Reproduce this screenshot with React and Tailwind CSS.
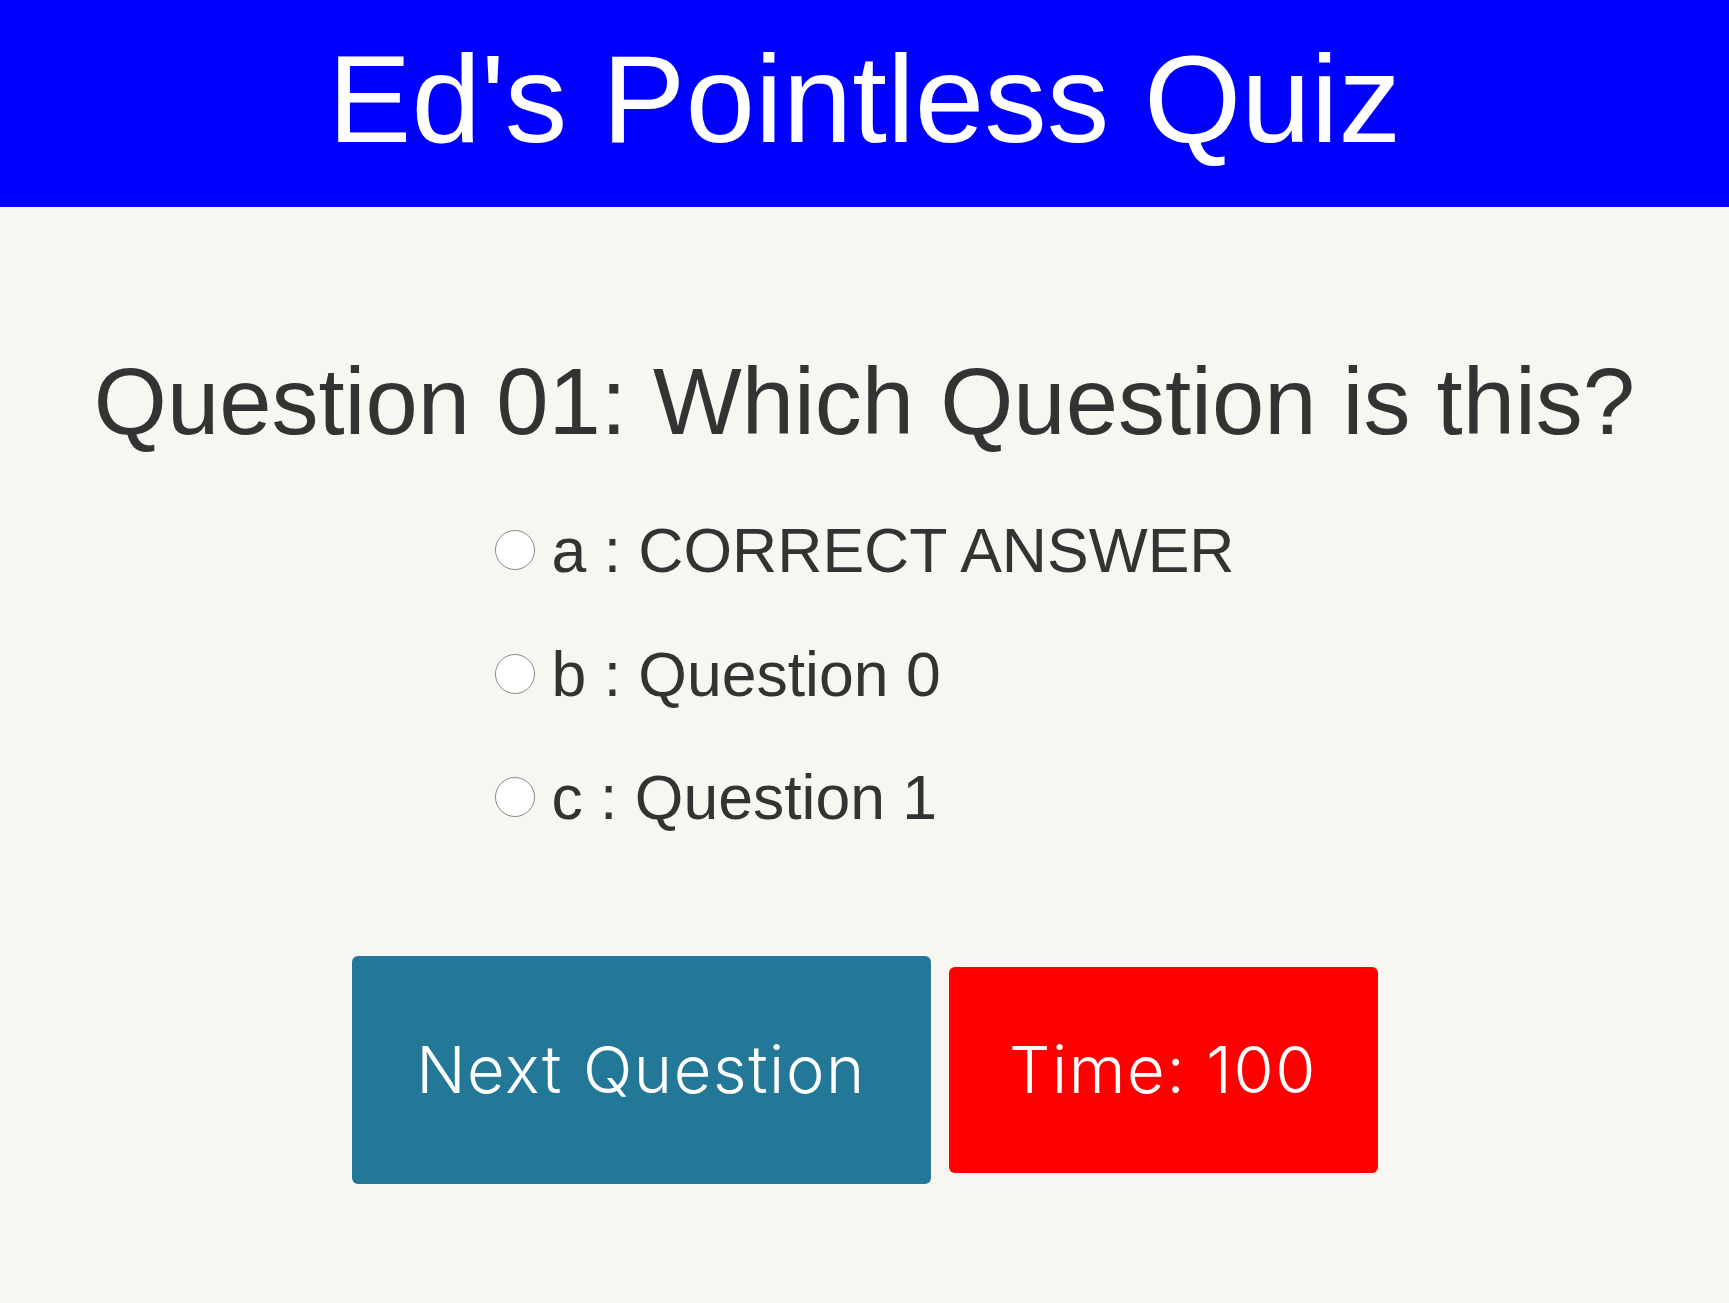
import React from "react";

const options = [
  { key: "a", label: "CORRECT ANSWER" },
  { key: "b", label: "Question 0" },
  { key: "c", label: "Question 1" },
];

export default function App() {
  return (
    <div className="min-h-[1303px] bg-[#f7f6f1] font-['Liberation_Sans',Arial,sans-serif] text-[#333333]">
      <header className="h-[207px] bg-[#0000ff] pt-[36px] text-center">
        <h1 className="text-[125px] leading-none font-normal text-white">Ed's Pointless Quiz</h1>
      </header>
      <main className="flex flex-col items-center">
        <h2 className="mt-[148px] text-[94px] leading-none font-normal text-center">
          Question 01: Which Question is this?
        </h2>
        <div className="mt-[70px] flex flex-col items-start gap-[61px]">
          {options.map((o) => (
            <label key={o.key} className="flex items-center text-[62.5px] leading-none">
              <input
                type="radio"
                name="answer"
                className="appearance-none w-[40px] h-[40px] rounded-full border border-[#8a8a8a] bg-white shrink-0"
              />
              <span className="ml-[17px]">
                {o.key} : {o.label}
              </span>
            </label>
          ))}
        </div>
        <div className="mt-[127px] flex items-center gap-[18px] font-['Inter',sans-serif] font-light tracking-[1.6px] text-white">
          <button className="w-[579px] h-[228px] rounded-[6px] bg-[#237898] text-[65px] leading-none flex items-center justify-center">
            Next Question
          </button>
          <div className="w-[429px] h-[206px] rounded-[6px] bg-[#ff0000] text-[65px] leading-none flex items-center justify-center">
            Time: 100
          </div>
        </div>
      </main>
    </div>
  );
}
